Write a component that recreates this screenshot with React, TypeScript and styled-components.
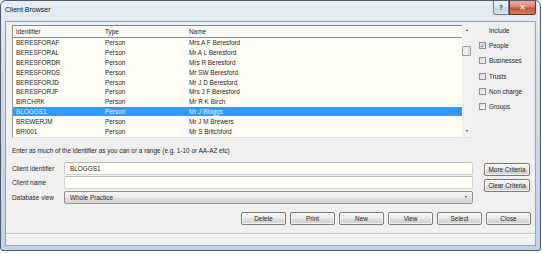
import React from 'react';
import styled, { createGlobalStyle } from 'styled-components';

const GlobalStyle = createGlobalStyle`
    html, body {
        margin: 0;
        padding: 0;
        background: #ffffff;
    }
    body {
        font-family: "Liberation Sans", Arial, sans-serif;
        font-size: 6.4px;
        color: #1e1e1e;
    }
    * {
        box-sizing: border-box;
    }
`;

interface ClientRow {
    id: string;
    type: string;
    name: string;
}

const rows: ClientRow[] = [
    { id: 'BERESFORAF', type: 'Person', name: 'Mrs A F Beresford' },
    { id: 'BERESFORAL', type: 'Person', name: 'Mr A L Beresford' },
    { id: 'BERESFORDR', type: 'Person', name: 'Mrs R Beresford' },
    { id: 'BERESFORDS', type: 'Person', name: 'Mr SW Beresford' },
    { id: 'BERESFORJD', type: 'Person', name: 'Mr J D Beresford' },
    { id: 'BERESFORJF', type: 'Person', name: 'Mrs J F Beresford' },
    { id: 'BIRCHRK', type: 'Person', name: 'Mr R K Birch' },
    { id: 'BLOGGS1', type: 'Person', name: 'Mr J Bloggs' },
    { id: 'BREWERJM', type: 'Person', name: 'Mr J M Brewers' },
    { id: 'BRI001', type: 'Person', name: 'Mr S Britchford' },
];

const includeOptions = [
    { label: 'People', checked: true },
    { label: 'Businesses', checked: false },
    { label: 'Trusts', checked: false },
    { label: 'Non charge', checked: false },
    { label: 'Groups', checked: false },
];

const actions = ['Delete', 'Print', 'New', 'View', 'Select', 'Close'];

const Window = styled.div`
    width: 541px;
    height: 251px;
    display: flex;
    flex-direction: column;
    padding: 0 4px 4px 4px;
    border: 1px solid #4d5b6c;
    border-radius: 6px 6px 3px 3px;
    background: linear-gradient(180deg, #e6edf4 0%, #d2dde9 30%, #c8d6e6 70%, #c0d1e4 100%);
    overflow: hidden;
`;

const TitleBar = styled.div`
    height: 20px;
    display: flex;
    align-items: flex-start;
`;

const Title = styled.span`
    margin-top: 5px;
    font-size: 7px;
    color: #111;
    flex: 1;
`;

const CaptionButton = styled.div<{ $close?: boolean }>`
    width: ${p => (p.$close ? '27px' : '16px')};
    height: 14px;
    display: flex;
    align-items: center;
    justify-content: center;
    border: 1px solid ${p => (p.$close ? '#6a3024' : '#6b7c90')};
    border-top: none;
    border-radius: ${p => (p.$close ? '0 0 3px 0' : '0 0 0 3px')};
    background: ${p =>
        p.$close
            ? 'linear-gradient(180deg, #e7b0a4 0%, #d88470 45%, #c75540 55%, #d97a62 100%)'
            : 'linear-gradient(180deg, #eef3f9 0%, #dbe5f0 45%, #c8d6e6 55%, #d6e2ee 100%)'};
    color: ${p => (p.$close ? '#ffffff' : '#4a5868')};
    font-size: ${p => (p.$close ? '8px' : '7px')};
    font-weight: bold;
    font-family: "DejaVu Sans", sans-serif;
`;

const Client = styled.div`
    flex: 1;
    display: flex;
    flex-direction: column;
    border: 1px solid #93a4b6;
    background: #f0f0f0;
`;

const Body = styled.div`
    display: flex;
    flex-direction: column;
    padding: 3px 4px 0 6px;
`;

const TopArea = styled.div`
    display: flex;
    height: 113px;
`;

const ListBox = styled.div`
    width: 459px;
    display: flex;
    border-left: 1px solid #9a9a9a;
    border-bottom: 1px solid #e2e2e2;
`;

const ListMain = styled.div`
    flex: 1;
    display: flex;
    flex-direction: column;
    background: #fffff7;
    border-top: 1px solid #7f8388;
`;

const ListHeader = styled.div`
    height: 12px;
    display: flex;
    align-items: center;
    background: #fafaf4;
    border-bottom: 1px solid #8e8e8e;
`;

const ListRow = styled.div<{ $selected?: boolean }>`
    height: 9.8px;
    display: flex;
    align-items: center;
    background: ${p => (p.$selected ? '#3399ff' : 'transparent')};
    color: ${p => (p.$selected ? '#e6efff' : '#1e1e1e')};
`;

const Cell = styled.span<{ $width?: number }>`
    width: ${p => (p.$width ? `${p.$width}px` : 'auto')};
    padding-left: 3px;
    white-space: nowrap;
`;

const ScrollBar = styled.div`
    width: 9px;
    display: flex;
    flex-direction: column;
    align-items: center;
    background: #f2f2f2;
    padding-top: 4px;
`;

const Arrow = styled.div<{ $down?: boolean }>`
    width: 0;
    height: 0;
    border-left: 1.5px solid transparent;
    border-right: 1.5px solid transparent;
    ${p => (p.$down ? 'border-top: 2px solid #333;' : 'border-bottom: 2px solid #333;')}
`;

const Thumb = styled.div`
    width: 9px;
    height: 10px;
    margin-top: 15px;
    border: 1px solid #9a9a9a;
    border-radius: 1px;
    background: linear-gradient(90deg, #f4f4f4, #e1e1e1);
`;

const ScrollSpacer = styled.div`
    flex: 1;
`;

const IncludePanel = styled.div`
    flex: 1;
    display: flex;
    flex-direction: column;
    padding: 1px 0 0 8px;
`;

const IncludeTitle = styled.div`
    height: 10px;
    line-height: 10px;
    padding-left: 10px;
    margin-bottom: 2px;
`;

const CheckRow = styled.label`
    height: 15.3px;
    display: flex;
    align-items: center;
    gap: 3px;
`;

const CheckBox = styled.span`
    width: 7px;
    height: 7px;
    display: flex;
    align-items: center;
    justify-content: center;
    border: 1px solid #8e8f8f;
    background: linear-gradient(135deg, #dcdcdc, #f7f7f7);
    color: #233d8c;
    font-size: 6px;
    font-family: "DejaVu Sans", sans-serif;
    line-height: 1;
`;

const Hint = styled.div`
    margin-top: 8px;
    height: 10px;
    line-height: 10px;
`;

const FormArea = styled.div`
    margin-top: 6px;
    display: flex;
    gap: 11px;
`;

const Fields = styled.div`
    width: 461px;
    display: grid;
    grid-template-columns: 52px 1fr;
    grid-auto-rows: 13px;
    row-gap: 1.3px;
    align-items: center;
`;

const FieldLabel = styled.span`
    color: #2a2a2a;
`;

const TextBox = styled.div`
    height: 13px;
    display: flex;
    align-items: center;
    padding-left: 5px;
    border: 1px solid #cfd2d4;
    border-top-color: #b8bbbe;
    border-radius: 2px;
    background: #fffff7;
`;

const SelectBox = styled(TextBox)`
    justify-content: space-between;
    padding-right: 5px;
    border-color: #8f9090;
    background: linear-gradient(180deg, #f3f3f3 0%, #ebebeb 50%, #dedede 51%, #d6d6d6 100%);
`;

const SideButtons = styled.div`
    display: flex;
    flex-direction: column;
    gap: 3px;
    padding-top: 1px;
`;

const Button = styled.div<{ $width: number }>`
    width: ${p => p.$width}px;
    height: 13px;
    display: flex;
    align-items: center;
    justify-content: center;
    border: 1px solid #7a7a7a;
    border-radius: 2px;
    background: linear-gradient(180deg, #f4f4f4 0%, #ebebeb 48%, #dddddd 52%, #d0d0d0 100%);
    box-shadow: inset 0 0 0 1px rgba(255, 255, 255, 0.7);
    color: #1e1e1e;
`;

const ButtonRow = styled.div`
    margin-top: 8px;
    display: flex;
    justify-content: flex-end;
    gap: 4px;
`;

const StatusStrip = styled.div`
    flex: 1;
    margin-top: 8px;
    border-top: 1px solid #c4c4c4;
    box-shadow: inset 0 1px 0 #ffffff;
    background: #f0f0f0;
`;

export default function App() {
    return (
        <>
            <GlobalStyle />
            <Window>
                <TitleBar>
                    <Title>Client Browser</Title>
                    <CaptionButton>?</CaptionButton>
                    <CaptionButton $close>✕</CaptionButton>
                </TitleBar>
                <Client>
                    <Body>
                        <TopArea>
                            <ListBox>
                                <ListMain>
                                    <ListHeader>
                                        <Cell $width={89}>Identifier</Cell>
                                        <Cell $width={84}>Type</Cell>
                                        <Cell>Name</Cell>
                                    </ListHeader>
                                    {rows.map(r => (
                                        <ListRow key={r.id} $selected={r.id === 'BLOGGS1'}>
                                            <Cell $width={89}>{r.id}</Cell>
                                            <Cell $width={84}>{r.type}</Cell>
                                            <Cell>{r.name}</Cell>
                                        </ListRow>
                                    ))}
                                </ListMain>
                                <ScrollBar>
                                    <Arrow />
                                    <Thumb />
                                    <ScrollSpacer />
                                    <Arrow $down />
                                    <div style={{ height: 5 }} />
                                </ScrollBar>
                            </ListBox>
                            <IncludePanel>
                                <IncludeTitle>Include</IncludeTitle>
                                {includeOptions.map(o => (
                                    <CheckRow key={o.label}>
                                        <CheckBox>{o.checked ? '✓' : ''}</CheckBox>
                                        {o.label}
                                    </CheckRow>
                                ))}
                            </IncludePanel>
                        </TopArea>
                        <Hint>Enter as much of the identifier as you can or a range (e.g. 1-10 or AA-AZ etc)</Hint>
                        <FormArea>
                            <Fields>
                                <FieldLabel>Client identifier</FieldLabel>
                                <TextBox>BLOGGS1</TextBox>
                                <FieldLabel>Client name</FieldLabel>
                                <TextBox />
                                <FieldLabel>Database view</FieldLabel>
                                <SelectBox>
                                    <span>Whole Practice</span>
                                    <Arrow $down />
                                </SelectBox>
                            </Fields>
                            <SideButtons>
                                <Button $width={46}>More Criteria</Button>
                                <Button $width={46}>Clear Criteria</Button>
                            </SideButtons>
                        </FormArea>
                        <ButtonRow>
                            {actions.map(a => (
                                <Button key={a} $width={45}>
                                    {a}
                                </Button>
                            ))}
                        </ButtonRow>
                    </Body>
                    <StatusStrip />
                </Client>
            </Window>
        </>
    );
}
